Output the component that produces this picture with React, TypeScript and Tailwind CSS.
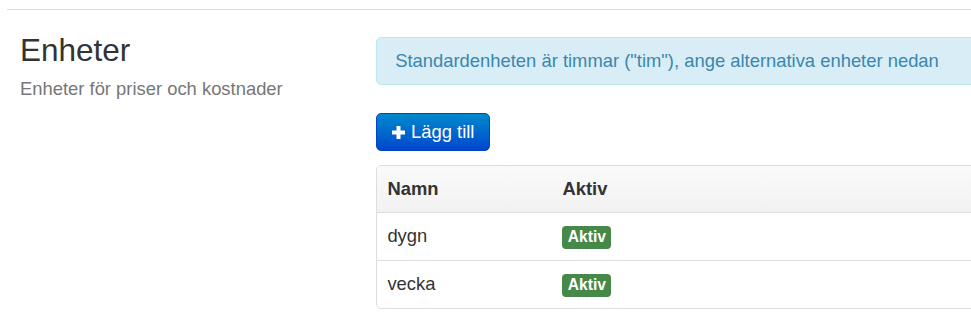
type Unit = {
  name: string;
  active: boolean;
};

const units: Unit[] = [
  { name: "dygn", active: true },
  { name: "vecka", active: true },
];

function PlusIcon() {
  return (
    <svg width="13" height="13" viewBox="0 0 13 13" className="shrink-0">
      <path d="M6.5 0v13M0 6.5h13" stroke="white" strokeWidth="4" />
    </svg>
  );
}

function ActiveLabel() {
  return (
    <span className="inline-block rounded-[4px] bg-[#468847] px-[5.4px] py-[2.6px] align-baseline text-[15.6px] font-bold leading-[18.2px] text-white">
      Aktiv
    </span>
  );
}

export default function App() {
  return (
    <div
      className="h-[324px] w-full overflow-hidden bg-white text-[18.4px] leading-[26px] text-[#333]"
      style={{ fontFamily: '"Liberation Sans", Arial, sans-serif' }}
    >
      <div className="w-[1300px] pl-[7px]">
        <div className="mt-[9px] border-t border-[#dddddd]" />

        <div className="ml-[13px] flex">
          {/* left: title */}
          <div className="w-[356px] shrink-0">
            <h1 className="mt-[23px] text-[31.5px] font-normal leading-[34px] text-[#333]">
              Enheter
            </h1>
            <p className="mt-[9px] text-[#777]">Enheter för priser och kostnader</p>
          </div>

          {/* right: content */}
          <div className="mt-[27px] w-[760px] shrink-0">
            <div className="rounded-[5px] border border-[#bce8f1] bg-[#d9edf7] py-[10px] pl-[18.2px] text-[#3a87ad]">
              Standardenheten är timmar ("tim"), ange alternativa enheter nedan
            </div>

            <button
              type="button"
              className="mt-[28px] flex h-[38px] items-center gap-[6px] rounded-[5px] border border-[#0044cc] bg-gradient-to-b from-[#0088cc] to-[#0044cc] pl-[15px] pr-[15px] text-white"
            >
              <PlusIcon />
              <span>Lägg till</span>
            </button>

            <div className="mt-[14px] overflow-hidden rounded-[5px] border border-[#dddddd]">
              <div className="grid h-[46px] grid-cols-[175px_1fr] bg-gradient-to-b from-[#fafafa] to-[#f2f2f2] font-bold">
                <div className="px-[10.4px] py-[10px]">Namn</div>
                <div className="px-[10.4px] py-[10px]">Aktiv</div>
              </div>
              {units.map((unit) => (
                <div
                  key={unit.name}
                  className="grid h-[48px] grid-cols-[175px_1fr] border-t border-[#dddddd]"
                >
                  <div className="px-[10.4px] py-[10.4px]">{unit.name}</div>
                  <div className="px-[10.4px] py-[10.4px]">
                    {unit.active ? <ActiveLabel /> : null}
                  </div>
                </div>
              ))}
            </div>
          </div>
        </div>
      </div>
    </div>
  );
}
